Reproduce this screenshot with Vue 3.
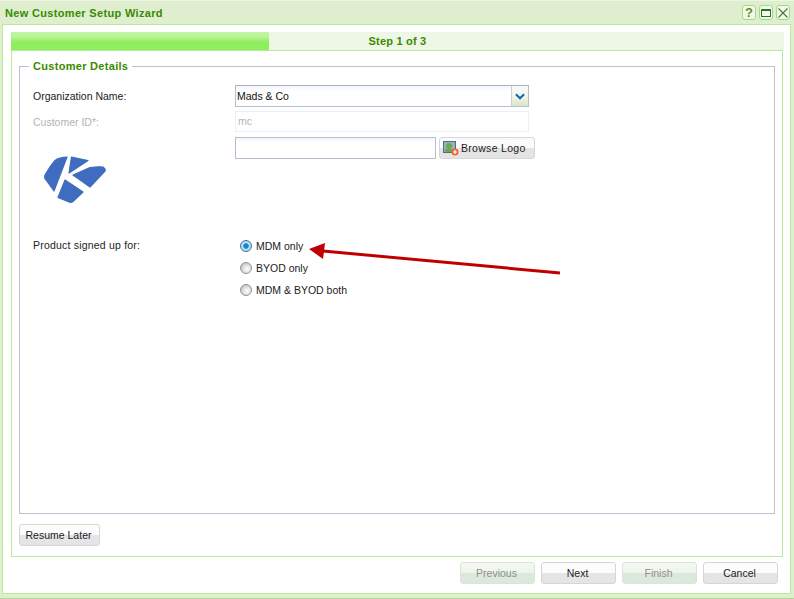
<script setup>
const radios = [
  { label: 'MDM only', on: true },
  { label: 'BYOD only', on: false },
  { label: 'MDM & BYOD both', on: false },
]
const navButtons = [
  { label: 'Previous', off: true },
  { label: 'Next', off: false },
  { label: 'Finish', off: true },
  { label: 'Cancel', off: false },
]
</script>

<template>
  <div class="window">
    <header class="titlebar">
      <h1 class="title">New Customer Setup Wizard</h1>
      <div class="tools">
        <span class="tool help">?</span>
        <span class="tool">
          <svg width="10" height="10" viewBox="0 0 10 10"><rect x="0.500" y="1.500" width="9" height="7" fill="none" stroke="#1f7a2a"/><rect x="0" y="1" width="10" height="2" fill="#1f7a2a"/></svg>
        </span>
        <span class="tool">
          <svg width="10" height="10" viewBox="0 0 10 10"><path d="M0.500 0.500l9 9M9.500 0.500l-9 9" stroke="#3f7a3a" stroke-width="1.100" fill="none"/></svg>
        </span>
      </div>
    </header>

    <main class="body">
      <div class="strip">
        <div class="fill"></div>
        <span class="step">Step 1 of 3</span>
      </div>
      <section class="panel">
        <fieldset class="group">
          <legend class="legend">Customer Details</legend>
          <div class="row first">
            <label class="label">Organization Name:</label>
            <div class="select">
              <span class="select-value">Mads &amp; Co</span>
              <span class="select-btn">
                <svg width="11" height="7" viewBox="0 0 11 7"><path d="M1 1l4.500 4.500L10 1" fill="none" stroke="#1268b3" stroke-width="2.200"/></svg>
              </span>
            </div>
          </div>
          <div class="row second">
            <label class="label muted">Customer ID*:</label>
            <div class="input disabled">mc</div>
          </div>
          <div class="row third">
            <div class="label logo-cell">
              <svg class="logo" width="62" height="50" viewBox="0 0 62 50">
                <g fill="#3f6cbe" stroke="#3f6cbe" stroke-width="1.200" stroke-linejoin="round">
                  <path d="M23 3 Q15 3 11 6.500 Q6 12 1 21 Q0 24 2 26 L10 37 Z"/>
                  <path d="M27.500 3 L44 6.500 L25 19 Z"/>
                  <path d="M29 21 L46 13.500 Q54 12.500 59 13 Q62 15 61 17 L46 33 Z"/>
                  <path d="M21 26 L39 38 L29 47.500 Q27 49 25 48 L14 43.500 Z"/>
                </g>
              </svg>
            </div>
            <div class="file-input"></div>
            <button class="browse" type="button">
              <svg width="16" height="15" viewBox="0 0 16 15">
                <rect x="0.500" y="0.500" width="12" height="11" fill="#8fb3c9" stroke="#5a6a78"/>
                <circle cx="6" cy="5" r="3" fill="#6aa84f"/>
                <rect x="2" y="8" width="9" height="3" fill="#6aa84f"/>
                <circle cx="12" cy="11" r="3.500" fill="#f0642a"/>
                <path d="M10 11h4M12 9v4" stroke="#fff" stroke-width="1.200"/>
              </svg>
              <span>Browse Logo</span>
            </button>
          </div>
          <div class="row product">
            <label class="label product-label">Product signed up for:</label>
            <div class="radios">
              <div v-for="r in radios" :key="r.label" class="radio-row">
                <span class="radio" :class="{ on: r.on }"></span>
                <span>{{ r.label }}</span>
              </div>
            </div>
          </div>
          <svg class="arrow" width="252" height="30" viewBox="0 0 252 30">
            <path d="M251 29 L14 7" stroke="#c00000" stroke-width="3" fill="none"/>
            <path d="M0 5 L16 -1 L14 15 Z" fill="#c00000"/>
          </svg>
        </fieldset>
        <button class="btn resume" type="button">Resume Later</button>
      </section>
      <footer class="nav">
        <button v-for="b in navButtons" :key="b.label" class="btn navbtn" :class="{ off: b.off }" type="button">{{ b.label }}</button>
      </footer>
    </main>
  </div>
</template>

<style>
html, body { margin: 0; padding: 0; background: #dfeed0; }
</style>

<style scoped>
.window {
  width: 794px;
  height: 599px;
  box-sizing: border-box;
  display: flex;
  flex-direction: column;
  background: #dfeecf;
  border-bottom: 1px solid #b7d49f;
  border-top: 1px solid #edf5e4;
  font-family: "Liberation Sans", Arial, sans-serif;
  font-size: 10.5px;
  color: #222;
  overflow: hidden;
}
.titlebar {
  height: 23px;
  flex: none;
  display: flex;
  align-items: center;
  justify-content: space-between;
  padding: 0 4px 0 5px;
}
.title {
  margin: 0;
  font-size: 11px;
  font-weight: bold;
  color: #3a8a00;
  letter-spacing: 0.33px;
}
.tools { display: flex; gap: 3px; }
.tool {
  width: 14px;
  height: 15px;
  box-sizing: border-box;
  border: 1px solid #a6d88a;
  border-radius: 3px;
  background: #f2f9ea;
  display: flex;
  align-items: center;
  justify-content: center;
  overflow: hidden;
}
.tool svg { flex: none; }
.help { font-weight: bold; font-size: 13px; color: #5f8a2a; }
.body {
  flex: 1;
  margin: 0 3px 4px 2px;
  box-sizing: border-box;
  border: 1px solid #b5ee96;
  background: #fff;
  padding: 7px 6px 0 8px;
  display: flex;
  flex-direction: column;
  min-height: 0;
}
.strip {
  height: 18px;
  flex: none;
  position: relative;
  background: #eef7e6;
  display: flex;
  align-items: center;
  justify-content: center;
}
.fill {
  position: absolute;
  left: 0;
  top: 0;
  bottom: 0;
  width: 258px;
  background: linear-gradient(#c2f6a2 0, #b6f392 30%, #8eee60 55%, #8eee60 100%);
}
.step { position: relative; font-size: 11px; font-weight: bold; color: #3a8a00; letter-spacing: 0.2px; }
.panel {
  height: 507px;
  flex: none;
  box-sizing: border-box;
  border: 1px solid #b5ee96;
  padding: 0 7px;
  display: flex;
  flex-direction: column;
  margin-right: 1px;
}
.group {
  position: relative;
  height: 455px;
  box-sizing: border-box;
  margin: 8px 0 0;
  padding: 0 13px;
  border: 1px solid #b9c2d0;
  min-width: 0;
  flex: none;
}
.legend {
  font-size: 11px;
  font-weight: bold;
  color: #3a8a00;
  padding: 0 4px;
  margin-left: -4px;
  line-height: 14px;
  letter-spacing: 0.3px;
}
.row { display: flex; align-items: center; }
.first { margin-top: 12px; height: 22px; }
.second { margin-top: 4px; height: 21px; }
.third { margin-top: 5px; height: 22px; align-items: flex-start; gap: 3px; }
.label { width: 202px; flex: none; }
.third .label { margin-right: -3px; }
.product-label { letter-spacing: 0.2px; }
.muted { color: #b4b4b4; }
.logo-cell { height: 22px; position: relative; }
.logo { position: absolute; left: 11px; top: 17px; }
.select {
  width: 294px;
  height: 22px;
  box-sizing: border-box;
  border: 1px solid #b4bfd0;
  border-top-color: #a8b4c8;
  display: flex;
  align-items: stretch;
  background: linear-gradient(#f1f6fb 0, #fff 5px);
}
.select-value { flex: 1; padding-left: 1px; line-height: 20px; color: #111; }
.select-btn {
  width: 16px;
  border-left: 1px solid #c8d0d8;
  background: linear-gradient(#f5f8fa 0, #f5f8ef 45%, #dde4c8 100%);
  display: flex;
  align-items: center;
  justify-content: center;
}
.select-btn svg { width: 10px; height: 7px; }
.input {
  width: 294px;
  height: 21px;
  box-sizing: border-box;
}
.disabled {
  border: 1px solid #edf0f3;
  color: #b4b4b4;
  padding-left: 2px;
  line-height: 19px;
}
.file-input {
  width: 201px;
  height: 22px;
  box-sizing: border-box;
  border: 1px solid #b4bfd0;
  background: linear-gradient(#f1f6fb 0, #fff 5px);
  flex: none;
}
.browse {
  width: 96px;
  height: 22px;
  padding: 0 0 0 3px;
  box-sizing: border-box;
  border: 1px solid #d6d6d6;
  border-radius: 3px;
  background: linear-gradient(#fafafa 0, #fbfbfb 50%, #e4e4e4 50%, #e4e4e4 100%);
  font: inherit;
  color: #222;
  display: flex;
  align-items: center;
  gap: 2px;
  letter-spacing: 0.3px;
}
.browse svg { flex: none; }
.product { margin-top: 76px; align-items: flex-start; }
.product .label { padding-top: 4px; }
.radios { display: flex; flex-direction: column; gap: 0; margin-left: 5px; }
.radio-row { height: 22px; display: flex; align-items: center; gap: 4px; color: #222; }
.radio {
  width: 12px;
  height: 12px;
  box-sizing: border-box;
  border: 1px solid #8f9499;
  border-radius: 50%;
  background: radial-gradient(circle at 60% 60%, #fff 0, #e4e4e4 40%, #b0b0b0 100%);
}
.radio.on {
  border-color: #3d7396;
  background: radial-gradient(circle, #0f7fd0 0, #0f8fe0 34%, #cfe4f2 46%, #8fb8d2 100%);
}
.arrow { position: absolute; left: 289px; top: 171px; pointer-events: none; overflow: visible; }
.btn {
  height: 22px;
  box-sizing: border-box;
  border: 1px solid #d6d6d6;
  border-radius: 3px;
  background: linear-gradient(#fcfcfc 0, #fcfcfc 50%, #e5e5e5 50%, #e5e5e5 100%);
  font: inherit;
  color: #222;
  padding: 0 2px 0 0;
}
.resume { width: 81px; margin-top: 10px; flex: none; }
.nav {
  display: flex;
  justify-content: flex-end;
  gap: 6px;
  margin-top: 5px;
  padding-right: 6px;
}
.navbtn { width: 75px; }
.off {
  color: #8a8f8a;
  border-color: #dbe5d6;
  background: linear-gradient(#f4f8f2 0, #eef4ea 50%, #dde8dd 50%, #dde8dd 100%);
}
</style>
